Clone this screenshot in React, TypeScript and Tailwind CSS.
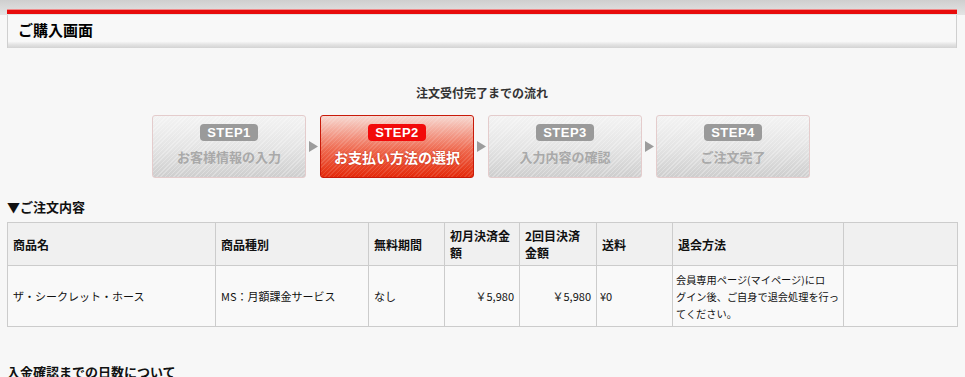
import React from 'react';

const font = "font-['Noto_Sans_CJK_JP','Noto_Sans',sans-serif]";

const steps = [
  { no: 'STEP1', label: 'お客様情報の入力', active: false },
  { no: 'STEP2', label: 'お支払い方法の選択', active: true },
  { no: 'STEP3', label: '入力内容の確認', active: false },
  { no: 'STEP4', label: 'ご注文完了', active: false },
];

const StepBox: React.FC<{ no: string; label: string; active: boolean }> = ({ no, label, active }) => (
  <div
    className={`w-[154px] h-[63px] rounded-[3px] border flex flex-col items-center pt-[8px] ${
      active
        ? 'border-[#c81a0a] [background:repeating-linear-gradient(135deg,rgba(255,255,255,0.12)_0_1px,transparent_1px_3px),linear-gradient(#f7d9d2,#ef6a50_55%,#e42a0a)]'
        : 'border-[#e4cccc] [background:repeating-linear-gradient(135deg,rgba(255,255,255,0.28)_0_1px,transparent_1px_3px),linear-gradient(#f3f3f3,#e5e5e5_50%,#cecece)]'
    }`}
  >
    <div
      className={`w-[58px] h-[17px] rounded-[4px] flex items-center justify-center text-white font-bold text-[13px] leading-none tracking-[0.5px] font-['Liberation_Sans',sans-serif] ${
        active ? 'bg-[#f20a0a]' : 'bg-[#9a9a9a]'
      }`}
    >
      {no}
    </div>
    <div
      className={`mt-[6px] font-bold leading-[20px] ${
        active ? 'text-white text-[14px] [text-shadow:0_0_2px_rgba(160,20,0,0.6)]' : 'text-[#a9a9a9] text-[13px]'
      }`}
    >
      {label}
    </div>
  </div>
);

const Arrow = () => (
  <svg width="9" height="11" viewBox="0 0 9 11" className="shrink-0">
    <polygon points="0,0 9,5.5 0,11" fill="#9c9c9c" />
  </svg>
);

export default function App() {
  return (
    <div className={`min-h-screen bg-[#f7f7f7] text-[#111] ${font}`}>
      {/* top band with red rule */}
      <div className="h-[15px] pt-[9px] pl-[7px] bg-[linear-gradient(#cfcfcf,#e4e4e4)]">
        <div className="w-[950px] h-[5px] bg-[#e80c0c] border-t border-[#f08a8a]" />
      </div>

      <div className="w-[950px] ml-[7px]">
        {/* page title box */}
        <div className="h-[33px] border-x border-[#cfcfcf] pl-[10px] flex items-center bg-[linear-gradient(#f8f8f8,#f8f8f8_80%,#e6e6e6_88%,#d3d3d3)]">
          <h1 className="text-[15px] font-bold leading-none pb-[4px] text-black">ご購入画面</h1>
        </div>

        {/* flow */}
        <div className="mt-[37px] text-center text-[12px] font-bold text-[#333] leading-[16px]">注文受付完了までの流れ</div>
        <div className="mt-[14px] flex items-center justify-center gap-[2px] pr-[2px]">
          {steps.map((s, i) => (
            <React.Fragment key={s.no}>
              {i > 0 && (
                <div className="w-[10px] flex justify-center">
                  <Arrow />
                </div>
              )}
              <StepBox {...s} />
            </React.Fragment>
          ))}
        </div>

        {/* order contents */}
        <h2 className="mt-[20px] text-[13px] font-bold leading-[18px]">▼ご注文内容</h2>
        <table className="mt-[6px] w-[950px] border-collapse border border-[#cccccc] text-[11px] table-fixed">
          <colgroup>
            <col className="w-[208px]" />
            <col className="w-[153px]" />
            <col className="w-[76px]" />
            <col className="w-[75px]" />
            <col className="w-[77px]" />
            <col className="w-[76px]" />
            <col className="w-[171px]" />
            <col className="w-[114px]" />
          </colgroup>
          <thead>
            <tr className="h-[43px] bg-[#f0f0f0] text-[12px] font-bold text-left">
              <th className="border border-[#cccccc] px-[5px] py-[4px] leading-[17px] align-middle">商品名</th>
              <th className="border border-[#cccccc] px-[5px] py-[4px] leading-[17px] align-middle">商品種別</th>
              <th className="border border-[#cccccc] px-[5px] py-[4px] leading-[17px] align-middle">無料期間</th>
              <th className="border border-[#cccccc] px-[5px] py-[4px] leading-[17px] align-middle">初月決済金額</th>
              <th className="border border-[#cccccc] px-[5px] py-[4px] leading-[17px] align-middle">2回目決済金額</th>
              <th className="border border-[#cccccc] px-[5px] py-[4px] leading-[17px] align-middle">送料</th>
              <th className="border border-[#cccccc] px-[5px] py-[4px] leading-[17px] align-middle">退会方法</th>
              <th className="border border-[#cccccc] px-[5px] py-[4px]"></th>
            </tr>
          </thead>
          <tbody>
            <tr className="h-[61px] bg-[#f9f9f9]">
              <td className="border border-[#cccccc] px-[5px] py-[3px] leading-[17px]">ザ・シークレット・ホース</td>
              <td className="border border-[#cccccc] px-[5px] py-[3px] leading-[17px]">MS：月額課金サービス</td>
              <td className="border border-[#cccccc] px-[5px] py-[3px] leading-[17px]">なし</td>
              <td className="border border-[#cccccc] px-[5px] py-[3px] leading-[17px] text-right">￥5,980</td>
              <td className="border border-[#cccccc] px-[5px] py-[3px] leading-[17px] text-right">￥5,980</td>
              <td className="border border-[#cccccc] px-[3px] py-[3px] leading-[17px]">¥0</td>
              <td className="border border-[#cccccc] px-[3px] py-[3px] leading-[17px] text-[10.2px] whitespace-nowrap">
                会員専用ページ(マイページ)にロ
                <br />
                グイン後、ご自身で退会処理を行っ
                <br />
                てください。
              </td>
              <td className="border border-[#cccccc] px-[5px] py-[3px]"></td>
            </tr>
          </tbody>
        </table>

        <h2 className="mt-[36px] text-[13px] font-bold leading-[18px]">入金確認までの日数について</h2>
        <div className="h-[40px]" />
      </div>
    </div>
  );
}
